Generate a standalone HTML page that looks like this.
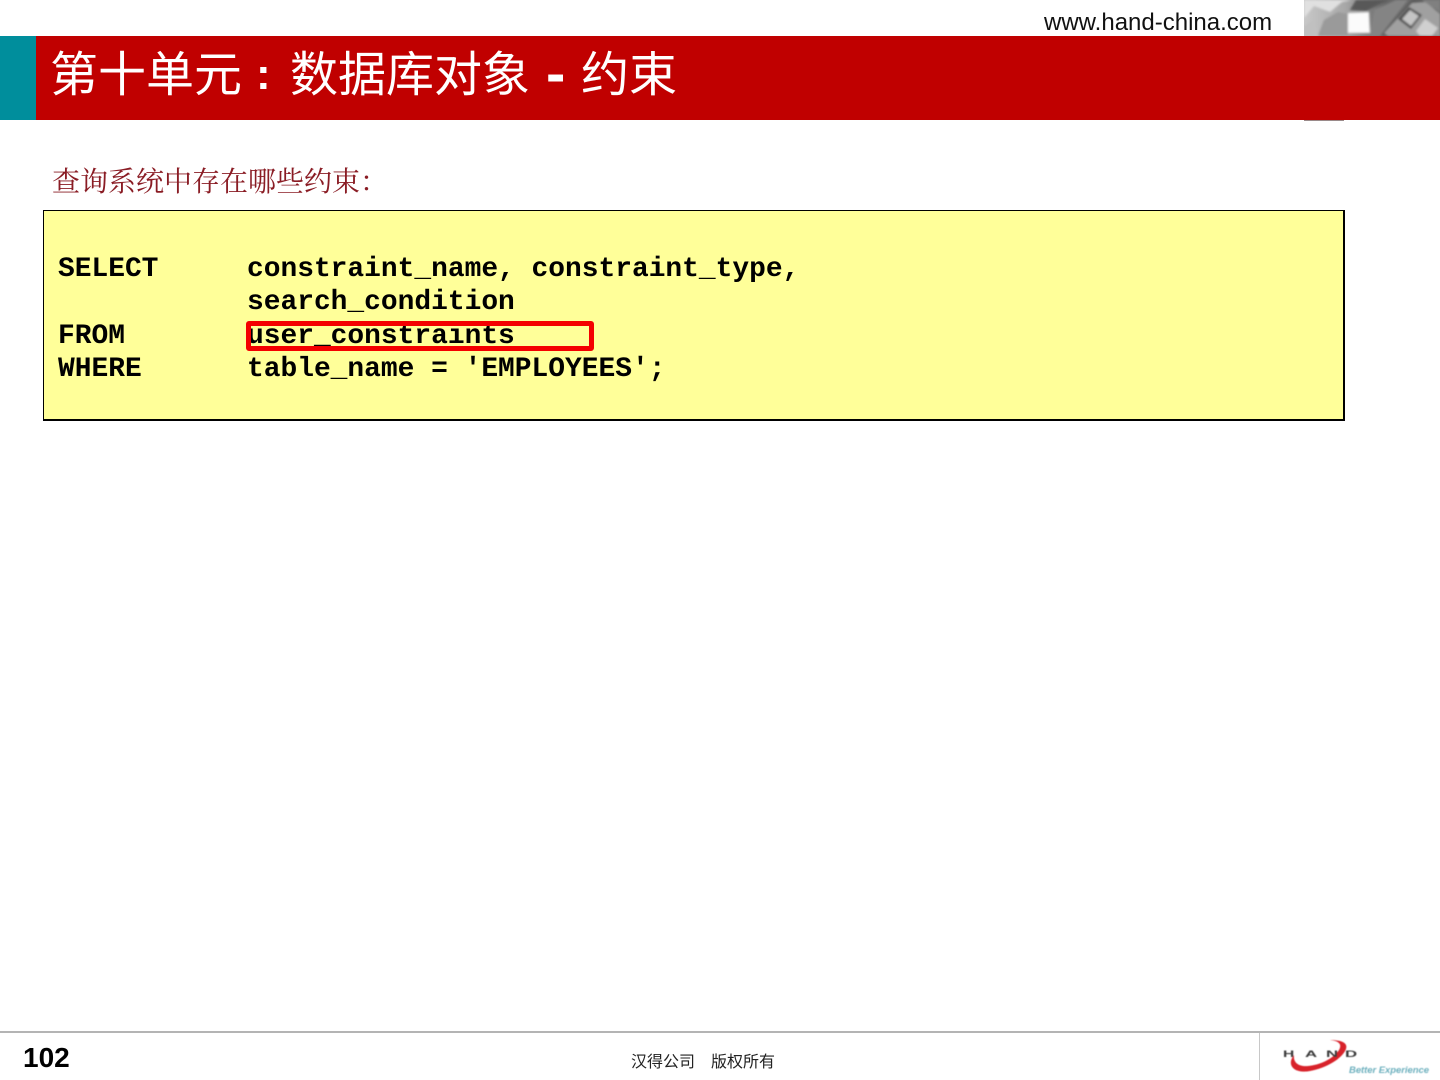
<!DOCTYPE html>
<html lang="zh">
<head>
<meta charset="utf-8">
<title>第十单元</title>
<style>
html,body{margin:0;padding:0;background:#fff;}
body{width:1440px;height:1080px;position:relative;overflow:hidden;font-family:"Liberation Sans","Noto Sans CJK SC",sans-serif;}
.a{position:absolute;white-space:pre;}
.code{font-family:"Liberation Mono",monospace;font-weight:bold;font-size:27.9px;line-height:33.4px;color:#000;}
.t{font-size:48px;line-height:62px;color:#fff;font-family:'Liberation Sans','WenQuanYi Zen Hei','Noto Sans CJK SC',sans-serif;}
</style>
</head>
<body>
<svg class="a" style="left:1304px;top:0" width="136" height="36" viewBox="0 0 136 36">
<defs>
<linearGradient id="g1" x1="0" y1="0" x2="1" y2="0"><stop offset="0" stop-color="#c8c8c8"/><stop offset=".3" stop-color="#a8a8a8"/><stop offset=".6" stop-color="#666"/><stop offset="1" stop-color="#707070"/></linearGradient>
<filter id="b"><feGaussianBlur stdDeviation="1"/></filter>
</defs>
<rect width="136" height="36" fill="url(#g1)"/>
<g filter="url(#b)">
<path d="M0 18L10 6L26 12L38 2L48 0H0Z" fill="#e0e0e0"/>
<path d="M0 26L10 20L14 36H0Z" fill="#c0c0c0"/>
<path d="M14 36L20 20L34 12L44 14L44 36Z" fill="#9a9a9a"/>
<path d="M44 13L65 12L66 33L44 33Z" fill="#fbfbfb"/>
<path d="M52 0H84L62 11L46 10Z" fill="#585858"/>
<path d="M66 36L70 10L92 0H104L76 36Z" fill="#848484"/>
<path d="M78 34L108 0H136V8L112 36Z" fill="#565656"/>
<path d="M80 33L108 3L122 2L136 14V36H84Z" fill="#a0a0a0"/>
<path d="M94 19L105 7L118 15L107 29Z" fill="#484848"/>
<path d="M98 19L106 10L115 16L107 26Z" fill="#c4c4c4"/>
<path d="M112 31L121 19L134 28L128 36H116Z" fill="#d0d0d0"/>
<path d="M118 0H136V12L128 7Z" fill="#808080"/>
</g>
</svg>

<div class="a" style="left:1044px;top:9px;font-size:24px;line-height:28px;color:#111;">www.hand-china.com</div>

<div class="a" style="left:0;top:36px;width:36px;height:84px;background:#008e9c;"></div>
<div class="a" style="left:36px;top:36px;width:1404px;height:84px;background:#c00000;"></div>
<div class="a" style="left:1304px;top:120px;width:40px;height:1px;background:#9a8a8a;"></div>

<div class="a t" style="left:50px;top:45px;">第十单元</div>
<div class="a t" style="left:256px;top:44px;font-size:44px;font-weight:bold;">:</div>
<div class="a t" style="left:290px;top:45px;">数据库对象</div>
<div class="a t" style="left:546px;top:43px;font-size:58px;font-weight:bold;">-</div>
<div class="a t" style="left:581px;top:45px;">约束</div>

<div class="a" style="left:52px;top:164px;font-size:28px;line-height:38px;color:#8a1c24;font-family:'Liberation Serif','Noto Serif CJK SC',serif;">查询系统中存在哪些约束：</div>

<div class="a" style="left:43px;top:210px;width:1299px;height:208px;background:#ffff99;border:1px solid #000;border-bottom-width:2px;border-right-width:2px;"></div>

<div class="a code" style="left:58px;top:253px;">SELECT</div>
<div class="a code" style="left:247px;top:253px;">constraint_name, constraint_type,</div>
<div class="a code" style="left:247px;top:285.5px;">search_condition</div>
<div class="a code" style="left:58px;top:320px;">FROM</div>
<div class="a code" style="left:247px;top:320px;">user_constraints</div>
<div class="a code" style="left:58px;top:353px;">WHERE</div>
<div class="a code" style="left:247px;top:353px;">table_name = 'EMPLOYEES';</div>

<div class="a" style="left:246px;top:321px;width:338px;height:20px;border:5px solid #f40000;border-radius:3px;"></div>

<div class="a" style="left:0;top:1031px;width:1440px;height:2px;background:#b4b4b4;"></div>
<div class="a" style="left:1259px;top:1033px;width:1px;height:47px;background:#c8c8c8;"></div>

<div class="a" style="left:23px;top:1041px;font-size:28px;line-height:33px;font-weight:bold;color:#000;">102</div>
<div class="a" style="left:631px;top:1052px;font-size:16px;line-height:22px;color:#222;">汉得公司　版权所有</div>

<svg class="a" style="left:1270px;top:1033px" width="170" height="47" viewBox="0 0 170 47">
<defs><filter id="lb" x="-5%" y="-20%" width="110%" height="140%"><feGaussianBlur stdDeviation="0.5"/></filter></defs>
<g filter="url(#lb)">
<path d="M24 22C16 32 24 41 40 38C56 35 72 26 76 16C78 10 72 7 60 7C70 8 72 12 69 17C63 26 50 32 38 33C28 34 23 29 24 22Z" fill="#d8232a"/>
<g font-family="'Liberation Sans',sans-serif" font-weight="bold" fill="#3a3a3a" font-size="12">
<text x="0" y="0" transform="translate(13 24) scale(1.3 .8)">H</text>
<text x="0" y="0" transform="translate(35 24) scale(1.4 .8)">A</text>
<text x="0" y="0" transform="translate(56 24) scale(1.4 .8)">N</text>
<text x="0" y="0" transform="translate(75 24) scale(1.4 .8)">D</text>
</g>
<text x="79" y="40" font-family="'Liberation Sans',sans-serif" font-weight="bold" font-style="italic" font-size="9.5" fill="#6db0be" textLength="80" lengthAdjust="spacing">Better Experience</text>
</g>
</svg>
</body>
</html>
